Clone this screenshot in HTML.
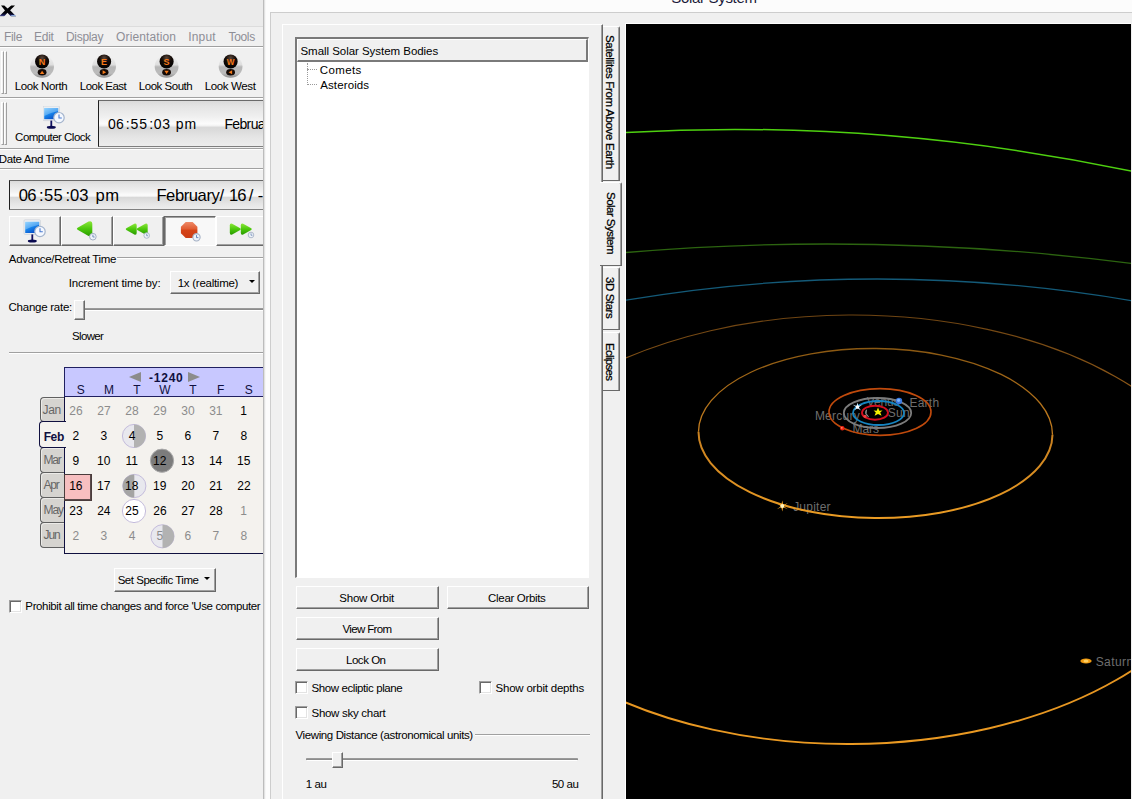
<!DOCTYPE html>
<html lang="en">
<head>
<meta charset="utf-8">
<title>Solar System</title>
<style>
html,body{margin:0;padding:0;background:#f0f0f0;}
body{width:1132px;height:799px;overflow:hidden;position:relative;font-family:"Liberation Sans",sans-serif;font-size:11px;color:#000;}
#root{position:absolute;left:0;top:0;width:1132px;height:799px;overflow:hidden;background:#f0f0f0;}
#root div,#root span,#root svg{position:absolute;box-sizing:border-box;}
.t{white-space:pre;line-height:20px;}
.hl{height:1px;background:#a0a0a0;}
.hw{height:1px;background:#fff;}
/* classic raised button */
.btn{background:#f0f0f0;border-top:1px solid #fff;border-left:1px solid #fff;border-right:1px solid #696969;border-bottom:1px solid #696969;}
.btn:after{content:"";position:absolute;left:0;top:0;right:0;bottom:0;border-right:1px solid #a0a0a0;border-bottom:1px solid #a0a0a0;}
.btnp{background:#f8f8f8;border-top:1px solid #696969;border-left:1px solid #696969;border-right:1px solid #fff;border-bottom:1px solid #fff;}
.btnp:after{content:"";position:absolute;left:0;top:0;right:0;bottom:0;border-left:1px solid #a0a0a0;border-top:1px solid #a0a0a0;}
.chk{width:13px;height:13px;background:#fff;border:1px solid #333;}
.grip{width:3px;border-left:1px solid #fff;border-top:1px solid #fff;border-right:1px solid #a0a0a0;border-bottom:1px solid #a0a0a0;}
.silver{background:linear-gradient(to bottom,#dadada 0%,#e4e4e4 12%,#f0f0f0 36%,#fbfbfb 50%,#f6f6f6 54%,#d8d8d8 59%,#dcdcdc 66%,#e6e6e6 82%,#ededed 100%);border-top:1px solid #6a6a6a;border-left:1px solid #202020;border-bottom:1px solid #808080;}
.mtab{left:40px;width:24px;background:#d6d4d0;border:1px solid #606060;box-shadow:inset 1px 1px 0 #ecebe8;border-right:none;border-radius:4px 0 0 4px;}
.vtab{left:603px;width:17px;border-radius:0 2px 0 0;background:#f0f0f0;border-top:1px solid #fff;border-right:1px solid #696969;border-bottom:1px solid #696969;box-shadow:inset -1px 0 0 #a0a0a0;}
.vt{transform:rotate(90deg);transform-origin:0 0;-webkit-text-stroke:0.25px #000;}
.arrow{width:0;height:0;border-left:3px solid transparent;border-right:3px solid transparent;border-top:3px solid #000;}
.chk3{width:13px;height:13px;background:#fff;border-top:1px solid #a0a0a0;border-left:1px solid #a0a0a0;border-right:1px solid #fff;border-bottom:1px solid #fff;box-shadow:inset 1px 1px 0 #696969,inset -1px -1px 0 #e3e3e3;}
.trk{height:3px;background:#8c8c8c;border-top:1px solid #9a9a9a;border-bottom:1px solid #fff;border-radius:1px;}

</style>
</head>
<body>
<div id="root">

<!-- ================= LEFT MAIN WINDOW ================= -->
<div id="lw" style="left:0;top:0;width:264px;height:799px;background:#f0f0f0;overflow:hidden;">
  <div style="left:0;top:0;width:264px;height:26px;background:#ebebeb;"></div>
  <div style="left:0;top:26px;width:264px;height:1px;background:#dcdcdc;"></div>
  <!-- app icon -->
  <svg style="left:0;top:4px;" width="18" height="14" viewBox="0 4 18 14">
    <defs><linearGradient id="xg" x1="0" y1="0" x2="0" y2="1"><stop offset="0" stop-color="#000"/><stop offset="0.7" stop-color="#020208"/><stop offset="0.9" stop-color="#1a1c58"/><stop offset="1" stop-color="#5a64b0"/></linearGradient></defs>
    <path d="M1 5.500 L4.300 5.500 L7.600 8.500 L11.200 5.500 L15 5.500 L10.100 10.300 L16 16.200 L10.800 16.200 L7.400 12.700 L4.600 16.100 L-0.600 16.100 L5 10.400 Z" fill="url(#xg)"/>
    <rect x="11.200" y="15.300" width="4.300" height="0.900" fill="#a8d4ff"/>
    <rect x="11.200" y="16.200" width="4.800" height="0.600" fill="#9aa0a8"/>
    <rect x="-0.600" y="16.100" width="4.800" height="0.500" fill="#a0a4ac"/>
  </svg>
  <div class="hl" style="left:0;top:46px;width:264px;"></div>
  <div class="hw" style="left:0;top:47px;width:264px;"></div>
  <div class="hl" style="left:0;top:97px;width:264px;"></div>
  <div class="hw" style="left:0;top:98px;width:264px;"></div>
  <div class="hl" style="left:0;top:148px;width:264px;"></div>
  <div class="hw" style="left:0;top:149px;width:264px;"></div>
  <div class="hl" style="left:0;top:168px;width:264px;"></div>
  <div class="hw" style="left:0;top:169px;width:264px;"></div>
  <!-- grips -->
  <div class="grip" style="left:1px;top:51px;height:43px;"></div>
  <div class="grip" style="left:4px;top:51px;height:43px;"></div>
  <div class="grip" style="left:1px;top:102px;height:43px;"></div>
  <div class="grip" style="left:4px;top:102px;height:43px;"></div>

  <!-- compass icons -->
  <svg style="left:0;top:48px;" width="264" height="40" viewBox="0 0 264 40">
    <defs>
      <linearGradient id="gs" x1="0" y1="0" x2="0" y2="1">
        <stop offset="0" stop-color="#f2f2f2"/><stop offset="0.42" stop-color="#dedede"/><stop offset="0.52" stop-color="#b6b6b6"/><stop offset="0.8" stop-color="#bcbcbc"/><stop offset="1" stop-color="#8e8e8e"/>
      </linearGradient>
      <radialGradient id="gb" cx="0.5" cy="0.25" r="0.75">
        <stop offset="0" stop-color="#5a463a"/><stop offset="0.45" stop-color="#140c08"/><stop offset="1" stop-color="#000"/>
      </radialGradient>
      <g id="cmp">
        <ellipse cx="0" cy="0" rx="11.900" ry="11.300" fill="url(#gs)"/>
        <circle cx="0" cy="-5" r="7.050" fill="url(#gb)"/>
        <ellipse cx="0" cy="5.700" rx="4.400" ry="3.200" fill="#140a06"/>
      </g>
    </defs>
    <g transform="translate(42.100,18.500)"><use href="#cmp"/><text x="0" y="-1.800" text-anchor="middle" font-family="Liberation Sans, sans-serif" font-weight="700" font-size="9" fill="#f47a1a">N</text><path d="M-2.200 7.400 L0 4.200 L2.200 7.400 Z" fill="#f47a1a"/></g>
    <g transform="translate(104.100,18.500)"><use href="#cmp"/><text x="0" y="-1.800" text-anchor="middle" font-family="Liberation Sans, sans-serif" font-weight="700" font-size="9" fill="#f47a1a">E</text><path d="M-1.500 3.700 L2 5.700 L-1.500 7.700 Z" fill="#f47a1a"/></g>
    <g transform="translate(166.600,18.500)"><use href="#cmp"/><text x="0" y="-1.800" text-anchor="middle" font-family="Liberation Sans, sans-serif" font-weight="700" font-size="9" fill="#f47a1a">S</text><path d="M-2.200 4.300 L2.200 4.300 L0 7.500 Z" fill="#f47a1a"/></g>
    <g transform="translate(230.600,18.500)"><use href="#cmp"/><text x="0" y="-1.700" text-anchor="middle" font-family="Liberation Sans, sans-serif" font-weight="700" font-size="8.2" fill="#f47a1a">W</text><path d="M1.500 3.700 L-2 5.700 L1.500 7.700 Z" fill="#f47a1a"/></g>
  </svg>

  <!-- computer clock icon (toolbar) -->
  <svg style="left:42.600px;top:105.800px;" width="26" height="26" viewBox="0 0 26 26">
    <defs>
      <linearGradient id="scr" x1="0" y1="0" x2="0.600" y2="1"><stop offset="0" stop-color="#6cc4ff"/><stop offset="0.5" stop-color="#1a8cf0"/><stop offset="1" stop-color="#0850c8"/></linearGradient>
      <g id="pc">
        <rect x="0" y="0" width="16.400" height="14.600" rx="1" fill="#eceff3" stroke="#c4cad4" stroke-width="0.6"/>
        <rect x="1.200" y="2" width="14" height="11.200" fill="url(#scr)"/>
        <path d="M1.200 2 L15.200 2 L15.200 5 Q8 6.500 1.200 10 Z" fill="#ffffff" opacity="0.28"/>
        <rect x="7.400" y="14.600" width="1.800" height="5.600" fill="#101060"/>
        <ellipse cx="8.300" cy="21.200" rx="4.500" ry="1.500" fill="#0a0a50"/>
        <circle cx="16" cy="11.700" r="5.200" fill="#f4f8ff" stroke="#a4b4cc" stroke-width="1.200"/>
        <path d="M16 8.400 L16 12 L18.800 12" fill="none" stroke="#4a7ad0" stroke-width="1.100"/>
      </g>
    </defs>
    <use href="#pc"/>
  </svg>

  <!-- toolbar time display -->
  <div class="silver" style="left:98px;top:100px;width:180px;height:47px;"></div>

  <!-- big time display -->
  <div class="silver" style="left:9px;top:180px;width:270px;height:30px;"></div>

  <!-- time control buttons -->
  <div class="btn" style="left:9px;top:216px;width:52px;height:30px;"></div>
  <div class="btn" style="left:61px;top:216px;width:52px;height:30px;"></div>
  <div class="btn" style="left:113px;top:216px;width:51px;height:30px;"></div>
  <div class="btnp" style="left:164px;top:216px;width:52px;height:30px;"></div>
  <div class="btn" style="left:216px;top:216px;width:52px;height:30px;"></div>
  <svg style="left:9px;top:216px;" width="255" height="30" viewBox="0 0 255 30">
    <defs>
      <linearGradient id="gg" x1="0" y1="0" x2="0" y2="1"><stop offset="0" stop-color="#8ce63a"/><stop offset="0.5" stop-color="#4cc80c"/><stop offset="1" stop-color="#2a9a00"/></linearGradient>
      <linearGradient id="gr" x1="0" y1="0" x2="0" y2="1"><stop offset="0" stop-color="#ee8a68"/><stop offset="0.45" stop-color="#e05a30"/><stop offset="0.5" stop-color="#d64418"/><stop offset="1" stop-color="#cc3c14"/></linearGradient>
      <g id="clk"><circle cx="0" cy="0" r="3.3" fill="#eef2f8" stroke="#a4b0c4" stroke-width="1"/><path d="M0 -2 L0 0.300 L1.700 0.300" fill="none" stroke="#5a7ab0" stroke-width="0.8"/></g>
      <path id="triL" d="M0.600 5.500 Q-0.600 4.700 0.600 3.900 L8.600 -0.700 Q11 -1.600 11 1 L11 8.400 Q11 11 8.600 10.100 Z"/>
    </defs>
    <use href="#pc" x="15" y="3.800"/>
    <!-- single back -->
    <path d="M68.600 13.700 Q67 12.800 68.600 11.800 L79.500 5.600 Q83.300 4 83.300 7.800 L83.300 17.600 Q83.300 21.600 79.500 20 Z" fill="url(#gg)"/>
    <use href="#clk" x="83.900" y="20.700"/>
    <!-- double back -->
    <use href="#triL" x="116.700" y="8.400" fill="url(#gg)"/>
    <use href="#triL" x="127.700" y="8.400" fill="url(#gg)"/>
    <g transform="translate(137.700,19.500) scale(0.85)"><use href="#clk"/></g>
    <!-- stop -->
    <path d="M176.700 5.900 L183.600 5.900 L188.400 10.700 L188.400 17.200 L183.600 22 L176.700 22 L171.900 17.200 L171.900 10.700 Z" fill="url(#gr)"/>
    <g transform="translate(187.500,21.300) scale(1.1)"><use href="#clk"/></g>
    <!-- double fwd -->
    <g transform="translate(231.800,0) scale(-1,1)"><use href="#triL" x="0" y="8.400" fill="url(#gg)"/></g>
    <g transform="translate(242.800,0) scale(-1,1)"><use href="#triL" x="0" y="8.400" fill="url(#gg)"/></g>
    <g transform="translate(242,19) scale(0.85)"><use href="#clk"/></g>
  </svg>

  <!-- group box line -->
  <div class="hl" style="left:117px;top:257px;width:150px;"></div>
  <div class="hw" style="left:117px;top:258px;width:150px;"></div>
  <!-- dropdown -->
  <div class="btn" style="left:170px;top:271px;width:90px;height:23px;"></div>
  <div class="arrow" style="left:249px;top:280px;"></div>
  <!-- slider -->
  <div class="trk" style="left:84px;top:308px;width:184px;"></div>
  <div class="btn" style="left:74px;top:300px;width:11px;height:20px;"></div>
  <!-- separator -->
  <div class="hl" style="left:9px;top:352px;width:260px;"></div>
  <div class="hw" style="left:9px;top:353px;width:260px;"></div>

  <!-- ===== calendar ===== -->
  <div style="left:64px;top:396px;width:210px;height:158px;background:#f4f2ee;border-left:1px solid #101040;border-bottom:1px solid #101040;"></div>
  <div style="left:64px;top:367px;width:210px;height:30px;background:#c8c8ff;border:1px solid #202060;"></div>
  <div style="left:129px;top:372px;width:0;height:0;border-top:5px solid transparent;border-bottom:5px solid transparent;border-right:12px solid #8c8c8c;"></div>
  <div style="left:188px;top:372px;width:0;height:0;border-top:5px solid transparent;border-bottom:5px solid transparent;border-left:12px solid #8c8c8c;"></div>
  <div class="mtab" style="top:397px;height:25px;"></div>
  <div class="mtab" style="top:447px;height:26px;"></div>
  <div class="mtab" style="top:472px;height:26px;"></div>
  <div class="mtab" style="top:497px;height:26px;"></div>
  <div class="mtab" style="top:522px;height:26px;"></div>
  <div style="left:39px;top:421px;width:27px;height:27px;background:#f4f2ee;border:1px solid #101040;border-right:none;border-radius:4px 0 0 4px;"></div>
  <!-- selected day -->
  <div style="left:64px;top:474px;width:28px;height:27px;background:#f7bfc0;border:1px solid #4a3c3c;box-shadow:inset -1px -1px 0 #5a4a4a;"></div>
  <!-- moons -->
  <svg style="left:64px;top:396px;" width="200" height="158" viewBox="64 396 200 158">
    <g stroke="#c4bcdc" stroke-width="1">
      <circle cx="134" cy="436" r="11.6" fill="#e8e8ee"/>
      <path d="M134 424.400 A11.600 11.600 0 0 1 134 447.600 Z" fill="#b2b2b2" stroke="none"/>
      <circle cx="162" cy="460.700" r="11.6" fill="#7c7c7c" stroke="#aaaaaa"/>
      <circle cx="134.300" cy="486" r="11.6" fill="#e8e8ee"/>
      <path d="M134.300 474.400 A11.600 11.600 0 0 0 134.300 497.600 Z" fill="#a4a4a4" stroke="none"/>
      <circle cx="134" cy="511" r="11.6" fill="#ffffff"/>
      <circle cx="162.500" cy="536.300" r="11.6" fill="#e8e8ee"/>
      <path d="M162.500 524.700 A11.600 11.600 0 0 1 162.500 547.900 Z" fill="#b2b2b2" stroke="none"/>
    </g>
  </svg>

  <!-- set specific time -->
  <div class="btn" style="left:114px;top:568px;width:102px;height:24px;"></div>
  <div class="arrow" style="left:204px;top:577px;"></div>
  <div class="chk3" style="left:9px;top:600px;"></div>
</div>

<!-- ================= DIALOG ================= -->
<div style="left:264px;top:0;width:868px;height:799px;background:#fcfcfc;"></div>
<div style="left:263px;top:0;width:1px;height:799px;background:#bcbcbc;"></div><div style="left:264px;top:0;width:1px;height:799px;background:#e2e2e2;"></div><div style="left:265px;top:0;width:1px;height:799px;background:#f6f6f6;"></div>
<div style="left:270px;top:12px;width:870px;height:800px;background:#f0f0f0;border-top:1px solid #cdcdcd;border-left:1px solid #cdcdcd;"></div>
<!-- tab page -->
<div style="left:282px;top:24px;width:321px;height:790px;background:#f0f0f0;border-top:1px solid #fff;border-left:1px solid #fff;border-right:1px solid #696969;box-shadow:inset -1px 0 0 #a0a0a0;"></div>
<!-- vertical tabs -->
<div class="vtab" style="top:26px;height:155px;"></div>
<div class="vtab" style="top:267px;height:63px;"></div>
<div class="vtab" style="top:332px;height:59px;"></div>
<div class="vtab" style="left:600px;top:182px;width:22px;height:84px;box-shadow:inset -1px 0 0 #a0a0a0;"></div>

<!-- tree list -->
<div style="left:295px;top:37px;width:294px;height:541px;background:#fff;border-top:2px solid #7a7a7a;border-left:2px solid #7a7a7a;border-right:1px solid #fff;border-bottom:1px solid #fff;"></div>
<div style="left:297px;top:39px;width:291px;height:23px;background:#f0f0f0;border-bottom:2px solid #7a7a7a;border-right:2px solid #7a7a7a;border-top:1px solid #fff;border-left:1px solid #fff;"></div>
<div style="left:307px;top:63px;width:1px;height:22px;border-left:1px dotted #9a9a9a;"></div>
<div style="left:307px;top:69px;width:10px;height:1px;border-top:1px dotted #9a9a9a;"></div>
<div style="left:307px;top:84px;width:10px;height:1px;border-top:1px dotted #9a9a9a;"></div>

<!-- buttons -->
<div class="btn" style="left:296px;top:586px;width:143px;height:23px;"></div>
<div class="btn" style="left:447px;top:586px;width:142px;height:23px;"></div>
<div class="btn" style="left:296px;top:617px;width:143px;height:23px;"></div>
<div class="btn" style="left:296px;top:648px;width:143px;height:23px;"></div>
<div class="chk3" style="left:295px;top:681px;"></div>
<div class="chk3" style="left:479px;top:681px;"></div>
<div class="chk3" style="left:295px;top:706px;"></div>
<div class="hl" style="left:475px;top:734px;width:115px;"></div>
<div class="hw" style="left:475px;top:735px;width:115px;"></div>
<div class="trk" style="left:306px;top:758px;width:272px;"></div>
<div class="btn" style="left:332px;top:752px;width:11px;height:16px;"></div>

<!-- ================= CANVAS ================= -->
<div style="left:625px;top:23px;width:506px;height:776px;background:#000;border-top:1px solid #fff;border-left:1px solid #fff;"></div>
<div style="left:0;top:0;width:1131px;height:799px;overflow:hidden;">
<span class="t" style="left:866.86px;top:392px;font-size:12px;letter-spacing:-0.206px;color:#6e6e6e;">Venus</span>
<span class="t" style="left:909.48px;top:393px;font-size:12px;letter-spacing:0.236px;color:#6e6e6e;">Earth</span>
<span class="t" style="left:887.63px;top:403px;font-size:12px;letter-spacing:0.370px;color:#6e6e6e;">Sun</span>
<span class="t" style="left:814.90px;top:406px;font-size:12px;letter-spacing:0.237px;color:#6e6e6e;">Mercury</span>
<span class="t" style="left:852.48px;top:419px;font-size:12px;letter-spacing:-0.012px;color:#6e6e6e;">Mars</span>
<span class="t" style="left:793.15px;top:497px;font-size:12px;letter-spacing:0.233px;color:#6e6e6e;">Jupiter</span>
<span class="t" style="left:1095.63px;top:652px;font-size:12px;letter-spacing:0.422px;color:#6e6e6e;">Saturn</span>
</div>
<svg style="left:626px;top:24px;" width="505" height="775" viewBox="626 24 505 775">
  <defs>
    <linearGradient id="gsat" gradientUnits="userSpaceOnUse" x1="0" y1="315" x2="0" y2="744">
      <stop offset="0" stop-color="#6e4412"/><stop offset="0.25" stop-color="#9a601a"/><stop offset="0.55" stop-color="#d88a20"/><stop offset="1" stop-color="#eb9a22"/>
    </linearGradient>
    <linearGradient id="gjup" gradientUnits="userSpaceOnUse" x1="0" y1="348" x2="0" y2="518">
      <stop offset="0" stop-color="#8a5812"/><stop offset="0.5" stop-color="#c88020"/><stop offset="1" stop-color="#eb9c24"/>
    </linearGradient>
  </defs>
  <!-- outer arcs (parabolic approximations) -->
  <path d="M626 132.560 Q879 117.900 1132 171.300" fill="none" stroke="#4ed010" stroke-width="1.5"/>
  <path d="M626 252.500 Q879 231.100 1132 263.500" fill="none" stroke="#2c6410" stroke-width="1.3"/>
  <path d="M626 300.200 Q879 257.500 1132 300.800" fill="none" stroke="#145a78" stroke-width="1.3"/>
  <g transform="rotate(-0.3 850 529.500)" fill="none" stroke="url(#gsat)">
    <path d="M474 529.500 A376 214.500 0 0 1 1226 529.500" stroke-width="1.2"/>
    <path d="M1226 529.500 A376 214.500 0 0 1 474 529.500" stroke-width="1.9"/>
  </g>
  <g transform="rotate(0.5 875.500 433.300)" fill="none" stroke="url(#gjup)">
    <path d="M698.500 433.300 A177 84.800 0 0 1 1052.500 433.300" stroke-width="1.3"/>
    <path d="M1052.500 433.300 A177 84.800 0 0 1 698.500 433.300" stroke-width="2"/>
  </g>
  <!-- inner -->
  <ellipse cx="880" cy="412" rx="51" ry="23.4" fill="none" stroke="#c04a0c" stroke-width="1.6"/>
  <ellipse cx="877.500" cy="413" rx="33.7" ry="15" fill="none" stroke="#7c7c7c" stroke-width="1.8"/>
  <ellipse cx="878.500" cy="413" rx="25.5" ry="12" fill="none" stroke="#1684c0" stroke-width="1.8"/>
  <ellipse cx="875" cy="412.700" rx="13" ry="7" fill="none" stroke="#d41020" stroke-width="1.9"/>
  <!-- bodies -->
  <path d="M878 407.500 L879.300 410.700 L882.500 410.400 L880.200 412.600 L881.600 415.800 L878 414 L874.600 415.800 L875.800 412.600 L873.600 410.400 L876.700 410.700 Z" fill="#f6f000"/>
  <path d="M866.500 409.800 A4.500 4.500 0 0 0 868.500 416.600 A5.500 5.500 0 0 1 866.500 409.800 Z" fill="#9a9a9a" stroke="#8a8a8a" stroke-width="1"/>
  <circle cx="865" cy="416.300" r="1.6" fill="#f04040"/>
  <circle cx="899" cy="401" r="3.2" fill="#3a78e0"/><circle cx="898.600" cy="400.300" r="1.6" fill="#78b4ff"/>
  <circle cx="842.300" cy="428.300" r="2.2" fill="#f02010"/><circle cx="841.800" cy="427.800" r="0.9" fill="#ff9070"/>
  <g transform="translate(857.500,407)"><path d="M0 -4.500 L0.900 -0.900 L5 -2.500 L1.200 0.300 L3.500 3.500 L0 1.200 L-3.500 3.500 L-1.200 0.300 L-5 -2.500 L-0.900 -0.900 Z" fill="#c8e8ff"/><circle r="1.7" fill="#fff"/></g>
  <g transform="translate(782.300,506)"><path d="M0 -5.500 L1 -1.100 L5.500 -3 L1.400 0.200 L5.500 3.200 L1 1.300 L0 5.500 L-1 1.300 L-5.500 3.200 L-1.400 0.200 L-5.500 -3 L-1 -1.100 Z" fill="#f0a020"/><circle r="2" fill="#fff4c0"/></g>
  <ellipse cx="1086" cy="661" rx="5.6" ry="2.600" fill="#f09a10"/><ellipse cx="1086" cy="661" rx="2.5" ry="1.6" fill="#ffd060"/>
</svg>

<div style="left:0;top:0;width:263px;height:799px;overflow:hidden;">
<span class="t" style="left:4.08px;top:27px;font-size:12px;letter-spacing:-0.360px;color:#8e8e96;">File</span>
<span class="t" style="left:34.00px;top:27px;font-size:12px;letter-spacing:-0.248px;color:#8e8e96;">Edit</span>
<span class="t" style="left:66.00px;top:27px;font-size:12px;letter-spacing:-0.316px;color:#8e8e96;">Display</span>
<span class="t" style="left:116.09px;top:27px;font-size:12px;letter-spacing:0.124px;color:#8e8e96;">Orientation</span>
<span class="t" style="left:188.17px;top:27px;font-size:12px;letter-spacing:0.201px;color:#8e8e96;">Input</span>
<span class="t" style="left:228.56px;top:27px;font-size:12px;letter-spacing:-0.356px;color:#8e8e96;">Tools</span>
<span class="t" style="left:14.78px;top:76px;font-size:11.5px;letter-spacing:-0.367px;">Look North</span>
<span class="t" style="left:79.82px;top:76px;font-size:11.5px;letter-spacing:-0.529px;">Look East</span>
<span class="t" style="left:138.82px;top:76px;font-size:11.5px;letter-spacing:-0.473px;">Look South</span>
<span class="t" style="left:204.82px;top:76px;font-size:11.5px;letter-spacing:-0.389px;">Look West</span>
<span class="t" style="left:15.11px;top:127px;font-size:11.5px;letter-spacing:-0.523px;">Computer Clock</span>
<span class="t" style="left:107.95px;top:114px;font-size:14px;letter-spacing:0.385px;">06</span>
<span class="t" style="left:125.83px;top:114px;font-size:14px;letter-spacing:0.820px;">:55</span>
<span class="t" style="left:149.22px;top:114px;font-size:14px;letter-spacing:0.695px;">:03</span>
<span class="t" style="left:175.67px;top:114px;font-size:14px;letter-spacing:1.090px;">pm</span>
<span class="t" style="left:224.38px;top:114px;font-size:14px;letter-spacing:-0.634px;">February/</span>
<span class="t" style="left:-1.17px;top:149px;font-size:11.5px;letter-spacing:-0.392px;">Date And Time</span>
<span class="t" style="left:18.87px;top:186px;font-size:16.6px;letter-spacing:-0.860px;">06</span>
<span class="t" style="left:39.09px;top:186px;font-size:16.6px;letter-spacing:0.335px;">:55</span>
<span class="t" style="left:65.59px;top:186px;font-size:16.6px;letter-spacing:-0.073px;">:03</span>
<span class="t" style="left:95.39px;top:186px;font-size:16.6px;letter-spacing:0.575px;">pm</span>
<span class="t" style="left:156.40px;top:186px;font-size:16.6px;letter-spacing:-0.423px;">February/</span>
<span class="t" style="left:229.02px;top:186px;font-size:16.6px;letter-spacing:-1.060px;">16</span>
<span class="t" style="left:248.70px;top:186px;font-size:16.6px;">/</span>
<span class="t" style="left:257.81px;top:186px;font-size:16.6px;letter-spacing:-0.366px;">-1240</span>
<span class="t" style="left:8.86px;top:249px;font-size:11.5px;letter-spacing:-0.330px;">Advance/Retreat Time</span>
<span class="t" style="left:68.67px;top:273px;font-size:11.5px;letter-spacing:-0.154px;">Increment time by:</span>
<span class="t" style="left:177.70px;top:273px;font-size:11.5px;letter-spacing:-0.262px;">1x (realtime)</span>
<span class="t" style="left:8.58px;top:297px;font-size:11.5px;letter-spacing:-0.259px;">Change rate:</span>
<span class="t" style="left:72.07px;top:326px;font-size:11.5px;letter-spacing:-0.661px;">Slower</span>
<span class="t" style="left:117.68px;top:570px;font-size:11.5px;letter-spacing:-0.477px;">Set Specific Time</span>
<span class="t" style="left:25.35px;top:596px;font-size:11.5px;letter-spacing:-0.376px;">Prohibit all time changes and force 'Use computer</span>
<span class="t" style="left:149.00px;top:368px;font-size:12px;letter-spacing:0.764px;color:#101040;font-weight:700;">-1240</span>
<span class="t" style="left:76.76px;top:380px;font-size:12px;color:#101040;">S</span>
<span class="t" style="left:104.00px;top:380px;font-size:12px;color:#101040;">M</span>
<span class="t" style="left:133.13px;top:380px;font-size:12px;color:#101040;">T</span>
<span class="t" style="left:159.15px;top:380px;font-size:12px;color:#101040;">W</span>
<span class="t" style="left:189.13px;top:380px;font-size:12px;color:#101040;">T</span>
<span class="t" style="left:217.00px;top:380px;font-size:12px;color:#101040;">F</span>
<span class="t" style="left:244.76px;top:380px;font-size:12px;color:#101040;">S</span>
<span class="t" style="left:69.30px;top:401px;font-size:12px;color:#8c8c8c;">26</span>
<span class="t" style="left:97.25px;top:401px;font-size:12px;color:#8c8c8c;">27</span>
<span class="t" style="left:125.21px;top:401px;font-size:12px;color:#8c8c8c;">28</span>
<span class="t" style="left:153.25px;top:401px;font-size:12px;color:#8c8c8c;">29</span>
<span class="t" style="left:181.24px;top:401px;font-size:12px;color:#8c8c8c;">30</span>
<span class="t" style="left:209.20px;top:401px;font-size:12px;color:#8c8c8c;">31</span>
<span class="t" style="left:240.29px;top:401px;font-size:12px;">1</span>
<span class="t" style="left:72.51px;top:426px;font-size:12px;">2</span>
<span class="t" style="left:100.50px;top:426px;font-size:12px;">3</span>
<span class="t" style="left:128.67px;top:426px;font-size:12px;">4</span>
<span class="t" style="left:156.59px;top:426px;font-size:12px;">5</span>
<span class="t" style="left:184.51px;top:426px;font-size:12px;">6</span>
<span class="t" style="left:212.53px;top:426px;font-size:12px;">7</span>
<span class="t" style="left:240.53px;top:426px;font-size:12px;">8</span>
<span class="t" style="left:72.60px;top:451px;font-size:12px;">9</span>
<span class="t" style="left:97.02px;top:451px;font-size:12px;">10</span>
<span class="t" style="left:125.59px;top:451px;font-size:12px;">11</span>
<span class="t" style="left:153.00px;top:451px;font-size:12px;">12</span>
<span class="t" style="left:181.06px;top:451px;font-size:12px;">13</span>
<span class="t" style="left:208.93px;top:451px;font-size:12px;">14</span>
<span class="t" style="left:237.06px;top:451px;font-size:12px;">15</span>
<span class="t" style="left:69.13px;top:476px;font-size:12px;">16</span>
<span class="t" style="left:97.00px;top:476px;font-size:12px;">17</span>
<span class="t" style="left:125.05px;top:476px;font-size:12px;">18</span>
<span class="t" style="left:153.00px;top:476px;font-size:12px;">19</span>
<span class="t" style="left:181.30px;top:476px;font-size:12px;">20</span>
<span class="t" style="left:209.19px;top:476px;font-size:12px;">21</span>
<span class="t" style="left:237.25px;top:476px;font-size:12px;">22</span>
<span class="t" style="left:69.22px;top:501px;font-size:12px;">23</span>
<span class="t" style="left:97.20px;top:501px;font-size:12px;">24</span>
<span class="t" style="left:125.22px;top:501px;font-size:12px;">25</span>
<span class="t" style="left:153.30px;top:501px;font-size:12px;">26</span>
<span class="t" style="left:181.25px;top:501px;font-size:12px;">27</span>
<span class="t" style="left:209.21px;top:501px;font-size:12px;">28</span>
<span class="t" style="left:240.29px;top:501px;font-size:12px;color:#8c8c8c;">1</span>
<span class="t" style="left:72.51px;top:526px;font-size:12px;color:#8c8c8c;">2</span>
<span class="t" style="left:100.50px;top:526px;font-size:12px;color:#8c8c8c;">3</span>
<span class="t" style="left:128.67px;top:526px;font-size:12px;color:#8c8c8c;">4</span>
<span class="t" style="left:156.59px;top:526px;font-size:12px;color:#8c8c8c;">5</span>
<span class="t" style="left:184.51px;top:526px;font-size:12px;color:#8c8c8c;">6</span>
<span class="t" style="left:212.53px;top:526px;font-size:12px;color:#8c8c8c;">7</span>
<span class="t" style="left:240.53px;top:526px;font-size:12px;color:#8c8c8c;">8</span>
<span class="t" style="left:42.59px;top:400px;font-size:12px;letter-spacing:-0.435px;color:#666666;">Jan</span>
<span class="t" style="left:43.66px;top:427px;font-size:12px;letter-spacing:-0.365px;color:#101040;font-weight:700;">Feb</span>
<span class="t" style="left:43.55px;top:450px;font-size:12px;letter-spacing:-1.195px;color:#666666;">Mar</span>
<span class="t" style="left:43.52px;top:475px;font-size:12px;letter-spacing:-1.242px;color:#666666;">Apr</span>
<span class="t" style="left:43.55px;top:500px;font-size:12px;letter-spacing:-1.102px;color:#666666;">May</span>
<span class="t" style="left:43.52px;top:525px;font-size:12px;letter-spacing:-1.050px;color:#666666;">Jun</span>
</div>
<span class="t" style="left:671.28px;top:-12px;font-size:15px;letter-spacing:-0.322px;color:#1a1a3a;">Solar System</span>
<span class="t" style="left:300.48px;top:41px;font-size:11.5px;letter-spacing:-0.039px;">Small Solar System Bodies</span>
<span class="t" style="left:319.77px;top:60px;font-size:11.5px;letter-spacing:0.376px;">Comets</span>
<span class="t" style="left:320.19px;top:75px;font-size:11.5px;letter-spacing:0.120px;">Asteroids</span>
<span class="t" style="left:339.33px;top:588px;font-size:11.5px;letter-spacing:-0.224px;">Show Orbit</span>
<span class="t" style="left:488.12px;top:588px;font-size:11.5px;letter-spacing:-0.330px;">Clear Orbits</span>
<span class="t" style="left:342.46px;top:619px;font-size:11.5px;letter-spacing:-0.638px;">View From</span>
<span class="t" style="left:346.00px;top:650px;font-size:11.5px;letter-spacing:-0.470px;">Lock On</span>
<span class="t" style="left:311.53px;top:678px;font-size:11.5px;letter-spacing:-0.406px;">Show ecliptic plane</span>
<span class="t" style="left:495.53px;top:678px;font-size:11.5px;letter-spacing:-0.212px;">Show orbit depths</span>
<span class="t" style="left:311.53px;top:703px;font-size:11.5px;letter-spacing:-0.285px;">Show sky chart</span>
<span class="t" style="left:295.46px;top:725px;font-size:11.5px;letter-spacing:-0.384px;">Viewing Distance (astronomical units)</span>
<span class="t" style="left:305.85px;top:774px;font-size:11.5px;letter-spacing:-0.438px;">1 au</span>
<span class="t" style="left:551.93px;top:774px;font-size:11.5px;letter-spacing:-0.474px;">50 au</span>
<span class="t vt" style="left:619.70px;top:34.67px;font-size:11.5px;letter-spacing:-0.325px;">Satellites From Above Earth</span>
<span class="t vt" style="left:621.20px;top:192.06px;font-size:11.5px;letter-spacing:-0.534px;">Solar System</span>
<span class="t vt" style="left:619.70px;top:277.39px;font-size:11.5px;letter-spacing:-0.423px;">3D Stars</span>
<span class="t vt" style="left:619.70px;top:342.83px;font-size:11.5px;letter-spacing:-0.679px;">Eclipses</span>
</div>

</body>
</html>
